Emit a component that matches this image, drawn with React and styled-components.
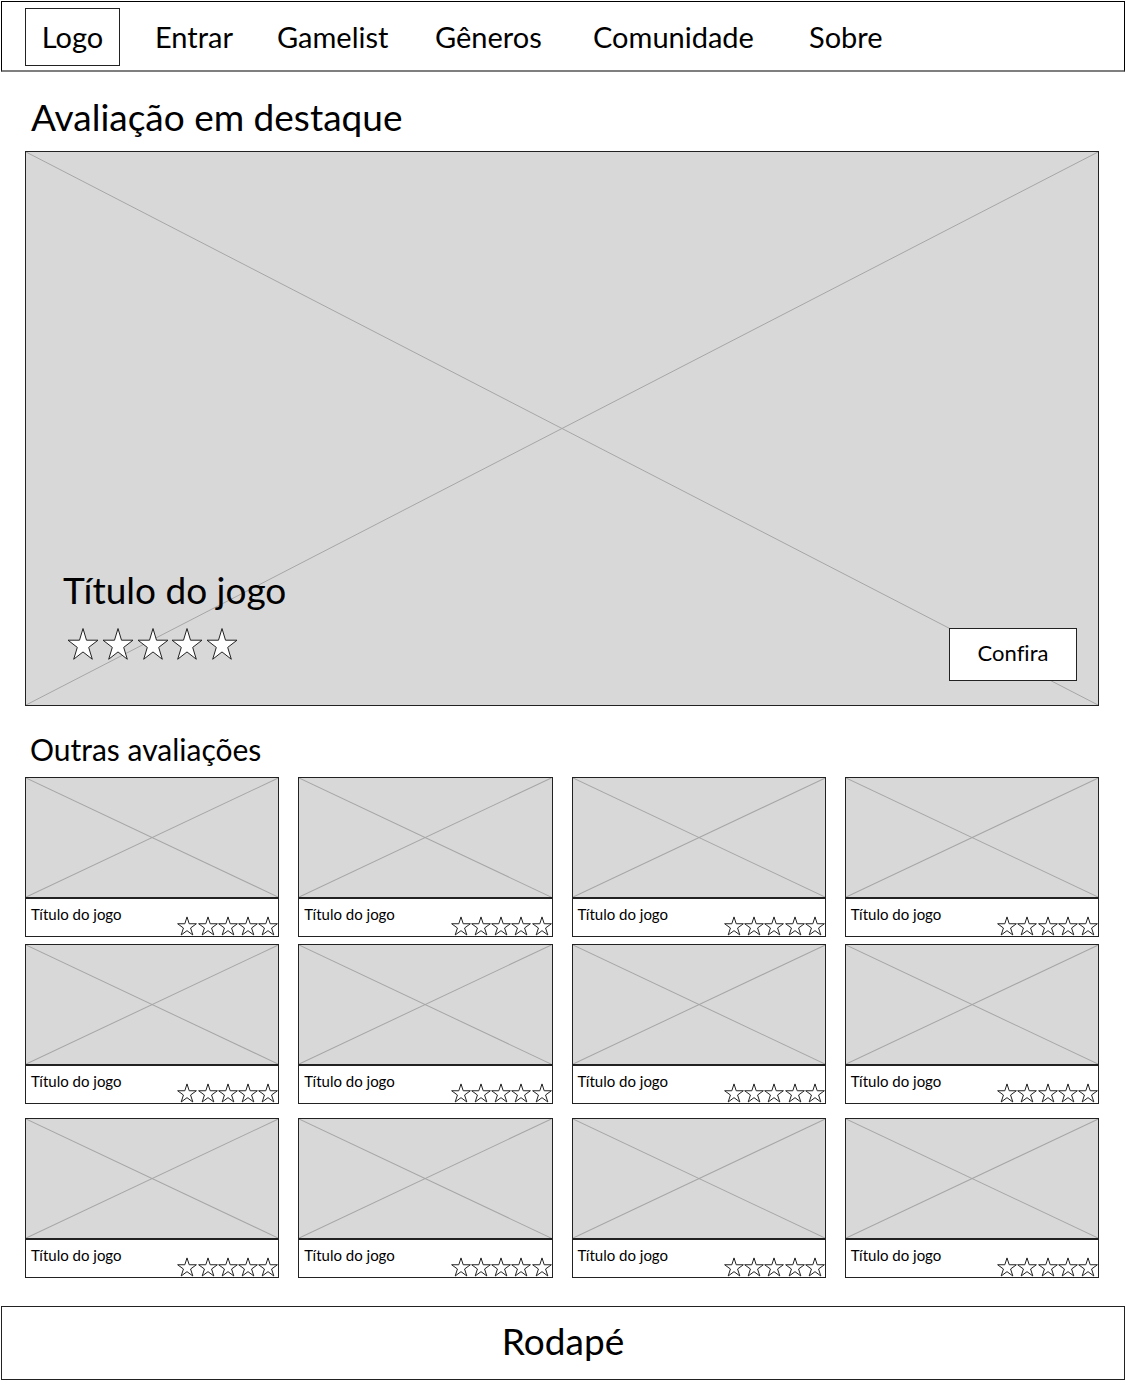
import React from 'react';
import styled, { createGlobalStyle } from 'styled-components';

const GlobalStyle = createGlobalStyle`
  *, *::before, *::after { box-sizing: border-box; }
  body {
    margin: 0;
    background: #fff;
    color: #000;
    font-family: Lato, "Open Sans", sans-serif;
    font-variant-ligatures: none;
  }
  h1, h2, h3, p { margin: 0; font-weight: 400; }
`;

const Page = styled.div`
  display: flex;
  flex-direction: column;
  padding: 1px 0 7px 1px;
`;

const Header = styled.header`
  display: flex;
  align-items: center;
  gap: 35px;
  height: 71px;
  padding: 1px 23px 0;
  border: 1px solid #000;
  border-bottom: 2px solid #7f7f7f;
`;

const Logo = styled.a`
  display: flex;
  align-items: center;
  justify-content: center;
  width: 95px;
  height: 58px;
  border: 1px solid #222;
  color: inherit;
  font-size: 29px;
  line-height: 34px;
  text-decoration: none;
`;

const Nav = styled.nav`
  display: grid;
  grid-template-columns: 122px 158px 158px 216px auto;
`;

const NavLink = styled.a`
  color: inherit;
  font-size: 29px;
  line-height: 34px;
  text-decoration: none;
`;

const Main = styled.main`
  display: flex;
  flex-direction: column;
  padding: 22px 26px 28px 24px;
`;

const SectionTitle = styled.h1`
  padding: 0 0 11px 6px;
  font-size: 37px;
  line-height: 46px;
`;

const SectionSubtitle = styled.h2`
  padding: 25px 0 10px 5px;
  font-size: 30px;
  line-height: 36px;
`;

const Picture = styled.div`
  display: grid;
  aspect-ratio: ${(p) => p.$ratio};
  border: 1px solid #222;
  background: #d8d8d8;
  overflow: hidden;

  & > * { grid-area: 1 / 1; min-height: 0; }
`;

const Cross = styled.svg`
  display: block;
  width: 100%;
  height: 100%;
  stroke: #a6a6a6;
`;

const HeroContent = styled.div`
  display: flex;
  align-items: flex-end;
  justify-content: space-between;
  padding: 0 21px 24px 37px;
`;

const HeroInfo = styled.div`
  display: flex;
  flex-direction: column;
  gap: 14px;
  padding-bottom: 20px;
`;

const HeroTitle = styled.h2`
  font-size: 37px;
  line-height: 46px;
`;

const Button = styled.button`
  width: 128px;
  height: 53px;
  padding: 0 0 4px;
  border: 1px solid #222;
  background: #fff;
  color: inherit;
  font: 400 22px/26px Lato, "Open Sans", sans-serif;
  font-variant-ligatures: none;
  cursor: pointer;
`;

const StarRow = styled.div`
  display: flex;
  justify-content: space-between;
  width: ${(p) => (p.$large ? 171 : 101)}px;
  margin-left: ${(p) => (p.$large ? 4 : 0)}px;
`;

const StarIcon = styled.svg`
  display: block;
  width: ${(p) => (p.$large ? 32 : 20)}px;
  height: ${(p) => (p.$large ? 34 : 20)}px;
  fill: #fff;
  stroke: #222;
`;

const Rows = styled.div`
  display: flex;
  flex-direction: column;
  gap: 7px;
`;

const Row = styled.div`
  display: grid;
  grid-template-columns: repeat(4, minmax(0, 1fr));
  gap: 19px;
  padding-top: ${(p) => (p.$spaced ? 7 : 0)}px;
`;

const Caption = styled.div`
  display: flex;
  justify-content: space-between;
  height: 39px;
  padding: 6px 0 0 5px;
  border: 1px solid #222;
`;

const CardTitle = styled.h3`
  font-size: 15px;
  line-height: 18px;
`;

const CardStars = styled.div`
  align-self: flex-end;
`;

const Footer = styled.footer`
  display: flex;
  align-items: center;
  justify-content: center;
  height: 74px;
  padding-bottom: 4px;
  border: 1px solid #222;
  font-size: 37px;
  line-height: 46px;
`;

const links = ['Entrar', 'Gamelist', 'Gêneros', 'Comunidade', 'Sobre'];

function Placeholder({ ratio, children }) {
  return (
    <Picture $ratio={ratio}>
      <Cross viewBox="0 0 100 100" preserveAspectRatio="none" aria-hidden="true">
        <path d="M0 0 100 100M100 0 0 100" fill="none" vectorEffect="non-scaling-stroke" />
      </Cross>
      {children}
    </Picture>
  );
}

function Stars({ large }) {
  return (
    <StarRow $large={large} role="img" aria-label="Avaliação">
      {[1, 2, 3, 4, 5].map((n) => (
        <StarIcon key={n} $large={large} viewBox="0 0 32 33" preserveAspectRatio="none">
          <path
            d="M16 1.5 19.5 12.8H31L21.7 19.8 25.3 31.3 16 24.2 6.7 31.3 10.3 19.8 1 12.8H12.5Z"
            vectorEffect="non-scaling-stroke"
          />
        </StarIcon>
      ))}
    </StarRow>
  );
}

function Card() {
  return (
    <article>
      <Placeholder ratio="254 / 121" />
      <Caption>
        <CardTitle>Título do jogo</CardTitle>
        <CardStars>
          <Stars />
        </CardStars>
      </Caption>
    </article>
  );
}

export default function App() {
  return (
    <>
      <GlobalStyle />
      <Page>
        <Header>
          <Logo href="#">Logo</Logo>
          <Nav>
            {links.map((label) => (
              <NavLink key={label} href="#">{label}</NavLink>
            ))}
          </Nav>
        </Header>
        <Main>
          <SectionTitle>Avaliação em destaque</SectionTitle>
          <Placeholder ratio="1074 / 555">
            <HeroContent>
              <HeroInfo>
                <HeroTitle>Título do jogo</HeroTitle>
                <Stars large />
              </HeroInfo>
              <Button type="button">Confira</Button>
            </HeroContent>
          </Placeholder>
          <SectionSubtitle>Outras avaliações</SectionSubtitle>
          <Rows>
            {[0, 1, 2].map((row) => (
              <Row key={row} $spaced={row === 2}>
                {[0, 1, 2, 3].map((col) => <Card key={col} />)}
              </Row>
            ))}
          </Rows>
        </Main>
        <Footer>Rodapé</Footer>
      </Page>
    </>
  );
}
